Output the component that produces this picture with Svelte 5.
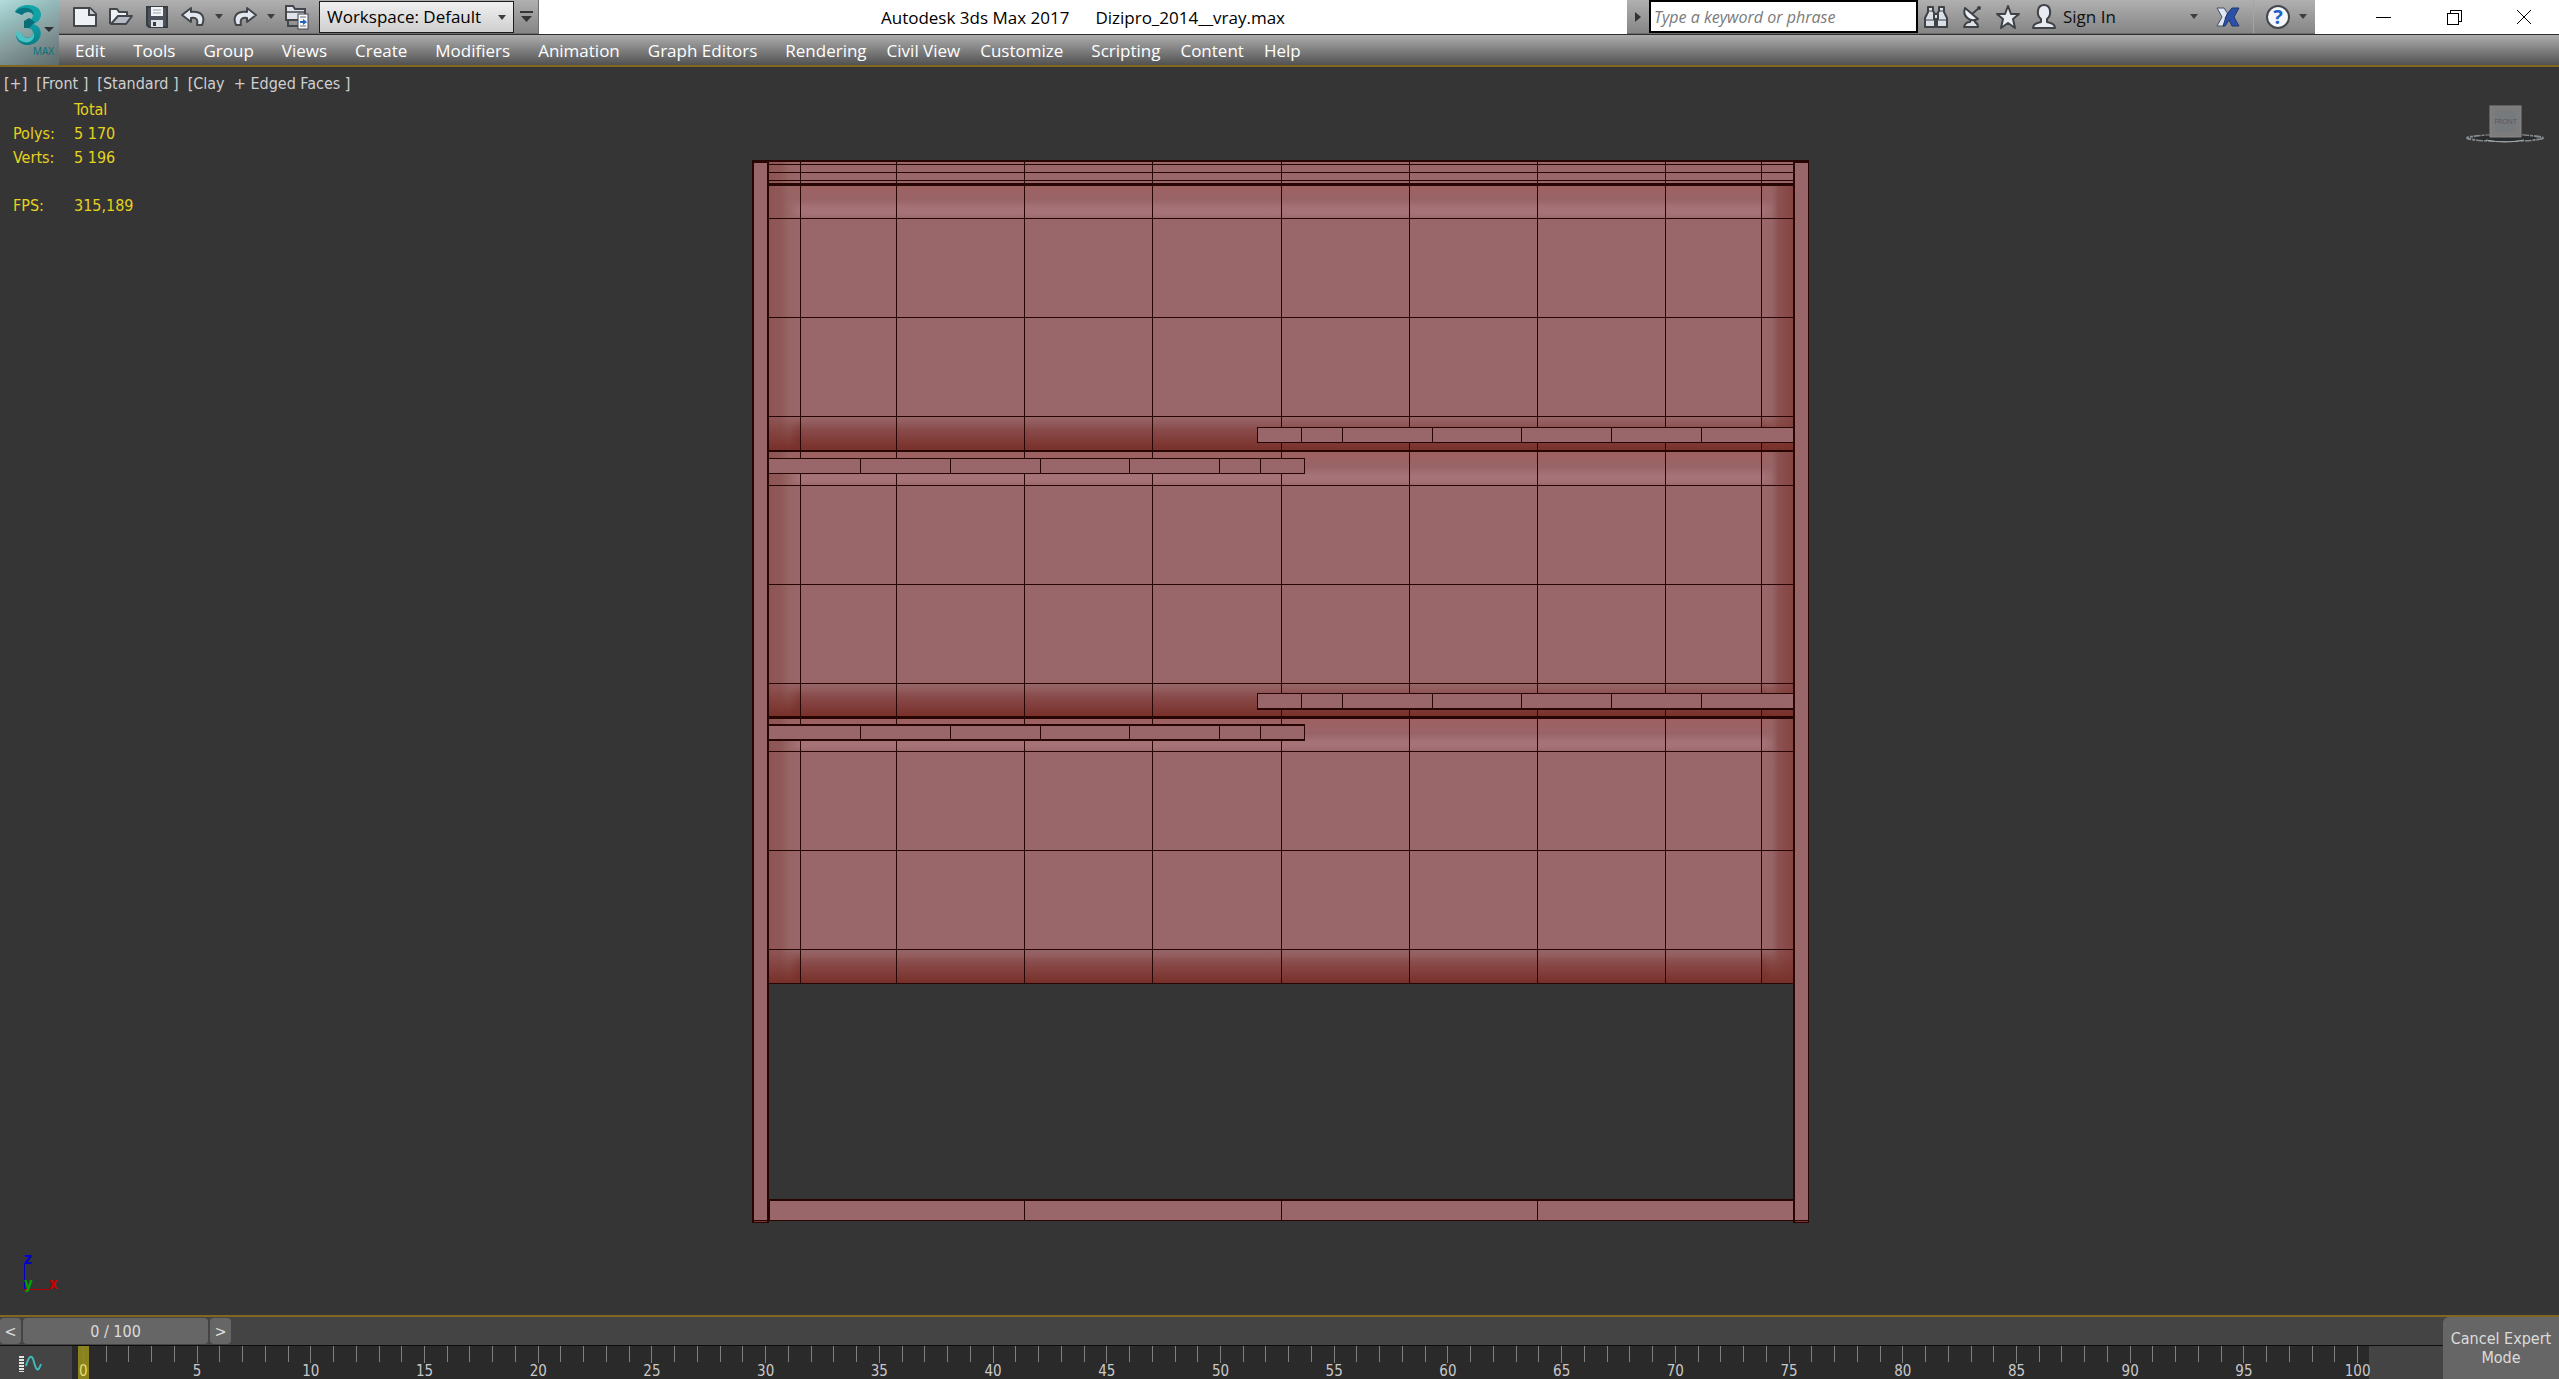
<script lang="ts">

    type MenuItem = { label: string; tight?: boolean };

    const menuItems: MenuItem[] = [
        { label: "Edit" },
        { label: "Tools" },
        { label: "Group" },
        { label: "Views" },
        { label: "Create" },
        { label: "Modifiers" },
        { label: "Animation" },
        { label: "Graph Editors" },
        { label: "Rendering", tight: true },
        { label: "Civil View", tight: true },
        { label: "Customize" },
        { label: "Scripting", tight: true },
        { label: "Content", tight: true },
        { label: "Help" },
    ];

    const viewportLabels = ["[+]", "[Front ]", "[Standard ]", "[Clay  + Edged Faces ]"];

    const stats = [
        { name: "", value: "Total" },
        { name: "Polys:", value: "5 170" },
        { name: "Verts:", value: "5 196" },
        { name: "", value: "" },
        { name: "FPS:", value: "315,189" },
    ];

    const frames = Array.from({ length: 101 }, (_, i) => i);

    let workspace = $state("Default");
    let keyword = $state("");
    let currentFrame = $state(0);

    const step = (delta: number) => {

        currentFrame = Math.min(100, Math.max(0, currentFrame + delta));

    };

    // model geometry, in viewport pixels measured from the cabinet's top left corner
    const columns = [48, 144, 272, 400, 529, 657, 785, 913, 1009];

    const panels = [
        { top: 25, bottom: 290, rows: [58, 157, 256] },
        { top: 292, bottom: 556, rows: [325, 424, 523] },
        { top: 559, bottom: 823, rows: [591, 690, 789] },
    ];

    const rails = [
        { x: 505, y: 267, width: 537, joints: [549, 590, 680, 769, 859, 949], heavy: false },
        { x: 16, y: 298, width: 537, joints: [108, 198, 288, 377, 467, 508], heavy: false },
        { x: 505, y: 533, width: 537, joints: [549, 590, 680, 769, 859, 949], heavy: false },
        { x: 16, y: 564, width: 537, joints: [108, 198, 288, 377, 467, 508], heavy: true },
    ];

</script>

{#snippet caret()}
    <svg class="caret" width="8" height="5" viewBox="0 0 8 5" aria-hidden="true">
        <path d="M0 0H8L4 5Z" fill="#3c3f42" />
    </svg>
{/snippet}

<div class="app">
    <header class="header">
        <button class="app-button" type="button" aria-label="Application menu">
            <svg width="59" height="65" viewBox="0 0 59 65" aria-hidden="true">
                <defs>
                    <linearGradient id="ribbon" x1="0" y1="0" x2="0" y2="1">
                        <stop offset="0" stop-color="#13a5a6" />
                        <stop offset="0.5" stop-color="#0b9ea2" />
                        <stop offset="1" stop-color="#087e88" />
                    </linearGradient>
                </defs>
                <path d="M15 12C18 3 40 2 41 14C41 20 37 23 33 24C42 26 42 35 39 39C35 47 18 48 16 36L22 34C25 40 33 38 33 33C33 28 28 28 24 28V21C29 21 33 19 33 15C32 11 25 11 22 15Z" fill="url(#ribbon)" />
                <path d="M15 12L22 15C25 11 32 11 33 15C35 11 29 7 23 8C19 8 17 10 15 12Z" fill="#0a7580" />
                <path d="M24 21L29 18L35 22L33 24L29 28H24Z" fill="#076d78" />
                <path d="M16 31L22 34C25 41 34 38 33 32C37 38 30 44 24 42C19 41 16 38 16 31Z" fill="#4fc3c4" />
                <path d="M44 27H54L49 32Z" fill="#2b3336" />
                <text x="33" y="55" font-size="10" fill="#04727a">MAX</text>
            </svg>
        </button>

        <div class="title-row">
            <div class="quick-access">
                <button class="tool" type="button" aria-label="New Scene">
                    <svg width="24" height="22" viewBox="0 0 24 22">
                        <path d="M1 2H17L23 8V20H1Z" fill="#eef1f6" stroke="#43474c" stroke-width="2" stroke-linejoin="round" />
                        <path d="M16 2V9H23" fill="#c9cdd5" stroke="#43474c" stroke-width="2" />
                    </svg>
                </button>
                <button class="tool" type="button" aria-label="Open File">
                    <svg width="24" height="22" viewBox="0 0 24 22">
                        <path d="M1 18V3H8L10 6H18V9" fill="#eef1f6" stroke="#43474c" stroke-width="2" stroke-linejoin="round" />
                        <path d="M2 18L9 10H23L17 18Z" fill="#b4bbc5" stroke="#43474c" stroke-width="2" stroke-linejoin="round" />
                    </svg>
                </button>
                <button class="tool" type="button" aria-label="Save File">
                    <svg width="22" height="22" viewBox="0 0 22 22">
                        <path d="M1 1H21V21H3L1 19Z" fill="#4d535d" stroke="#383c43" stroke-width="2" />
                        <rect x="5" y="1" width="12" height="9" fill="#f3f4f7" />
                        <path d="M7 4H15M7 7H15" stroke="#9ca1a9" />
                        <rect x="5" y="14" width="12" height="7" fill="#dfe2e7" />
                        <rect x="7" y="16" width="3" height="4" fill="#383c43" />
                    </svg>
                </button>
                <button class="tool" type="button" aria-label="Undo">
                    <svg width="24" height="20" viewBox="0 0 24 20">
                        <path d="M10 1L1 8L10 15V11C16 10 17 13 16 18H21C25 9 20 4 10 5Z" fill="#e4e9f1" stroke="#43474c" stroke-width="2" stroke-linejoin="round" />
                    </svg>
                </button>
                <button class="tool-caret" type="button" aria-label="Undo history">{@render caret()}</button>
                <button class="tool" type="button" aria-label="Redo">
                    <svg width="24" height="20" viewBox="0 0 24 20">
                        <path d="M14 1L23 8L14 15V11C8 10 7 13 8 18H3C-1 9 4 4 14 5Z" fill="#e4e9f1" stroke="#43474c" stroke-width="2" stroke-linejoin="round" />
                    </svg>
                </button>
                <button class="tool-caret" type="button" aria-label="Redo history">{@render caret()}</button>
                <button class="tool" type="button" aria-label="Project Folder">
                    <svg width="26" height="26" viewBox="0 0 26 26">
                        <path d="M2 16V2H9L11 5H21V16Z" fill="#e0e4ea" stroke="#43474c" stroke-width="2" />
                        <path d="M3 8H20" stroke="#6a6f76" stroke-width="2" />
                        <path d="M4 17V22H14" fill="none" stroke="#43474c" stroke-width="2" />
                        <rect x="14" y="10" width="10" height="15" fill="#f5f7fa" stroke="#43474c" />
                        <path d="M16 13H22M16 22H22" stroke="#6a6f76" />
                        <path d="M16 17H19V15L23 18L19 21V19H16Z" fill="#2461c4" />
                    </svg>
                </button>
                <div class="workspace">
                    <select aria-label="Workspace" bind:value={workspace}>
                        <option value="Default">Workspace: Default</option>
                    </select>
                    <span class="workspace-caret">{@render caret()}</span>
                </div>
                <button class="customize-bar" type="button" aria-label="Customize Quick Access Toolbar">
                    <svg width="13" height="12" viewBox="0 0 13 12">
                        <path d="M0 1H13" stroke="#34373a" stroke-width="2" />
                        <path d="M1 5H12L6.500 11Z" fill="#34373a" />
                    </svg>
                </button>
            </div>

            <h1 class="title">
                <span>Autodesk 3ds Max 2017</span>
                <span>Dizipro_2014__vray.max</span>
            </h1>

            <div class="info-center">
                <button class="expand" type="button" aria-label="Collapse search">
                    <svg width="6" height="10" viewBox="0 0 6 10"><path d="M0 0L6 5L0 10Z" fill="#303335" /></svg>
                </button>
                <input class="search" type="text" aria-label="Search" placeholder="Type a keyword or phrase" bind:value={keyword} />
                <button class="tool" type="button" aria-label="Search">
                    <svg width="26" height="24" viewBox="0 0 26 24">
                        <g fill="#dbe0e8" stroke="#3e4247" stroke-width="2" stroke-linejoin="round">
                            <path d="M5 2H10V6L12 9V22H2V13L5 7Z" />
                            <path d="M16 2H21V7L24 13V22H14V9L16 6Z" />
                            <path d="M11 9H15V14H11Z" />
                        </g>
                        <path d="M3 15H11M15 15H23M5 6H10M16 6H21" stroke="#3e4247" />
                    </svg>
                </button>
                <button class="tool" type="button" aria-label="Subscription Center">
                    <svg width="22" height="24" viewBox="0 0 22 24">
                        <path d="M3 22C4 18 7 17 9 17L10 14H13L14 17C16 18 17 20 17 22Z" fill="#dfe3ea" stroke="#3e4247" stroke-width="2" stroke-linejoin="round" />
                        <path d="M4 3C1 11 9 18 17 14Z" fill="#eef1f5" stroke="#3e4247" stroke-width="2" stroke-linejoin="round" />
                        <path d="M11 9L18 3" stroke="#3e4247" stroke-width="2" />
                        <circle cx="18" cy="3" r="2" fill="#3e4247" />
                    </svg>
                </button>
                <button class="tool" type="button" aria-label="Favorites">
                    <svg width="24" height="24" viewBox="0 0 24 24">
                        <path d="M12 1L15 9H23L17 14L19 23L12 18L5 23L7 14L1 9H9Z" fill="#e8ebf0" stroke="#3e4247" stroke-width="2" stroke-linejoin="round" />
                    </svg>
                </button>
                <button class="sign-in" type="button">
                    <svg width="26" height="26" viewBox="0 0 26 26" aria-hidden="true">
                        <path d="M2 24C2 19 7 19 10 18V15C5 11 6 1 13 1C20 1 21 11 16 15V18C19 19 24 19 24 24Z" fill="#e8ecf2" stroke="#3e4247" stroke-width="2" stroke-linejoin="round" />
                    </svg>
                    <span>Sign In</span>
                    {@render caret()}
                </button>
                <button class="exchange" type="button" aria-label="Autodesk App Store">
                    <svg width="24" height="22" viewBox="0 0 24 22">
                        <path d="M1 2H8L12 8L9 12L11 16L8 20H1L6 11Z" fill="#dfe5f1" stroke="#44516c" />
                        <path d="M23 2H16L11 8L7 20H9L13 14L16 20H23L18 11Z" fill="#2c4fa8" stroke="#20376f" />
                    </svg>
                </button>
                <button class="help" type="button" aria-label="Help">
                    <svg width="26" height="26" viewBox="0 0 26 26">
                        <circle cx="13" cy="13" r="11" fill="#f5f7fa" stroke="#44484d" stroke-width="2" />
                        <text class="help-mark" x="13" y="20" text-anchor="middle">?</text>
                    </svg>
                    {@render caret()}
                </button>
            </div>

            <div class="window-buttons">
                <button type="button" aria-label="Minimize">
                    <svg width="16" height="16" viewBox="0 0 16 16"><path d="M0 8H15" /></svg>
                </button>
                <button type="button" aria-label="Restore">
                    <svg width="16" height="16" viewBox="0 0 16 16"><path d="M1 4H12V15H1ZM4 4V1H15V12H12" /></svg>
                </button>
                <button type="button" aria-label="Close">
                    <svg class="smooth" width="16" height="16" viewBox="0 0 16 16"><path d="M1 1L15 15M15 1L1 15" /></svg>
                </button>
            </div>
        </div>

        <nav class="menu-bar" aria-label="Main menu">
            {#each menuItems as item}
                <button class={`menu-item ${item.tight ? "menu-item-tight" : ""}`} type="button">{item.label}</button>
            {/each}
        </nav>
    </header>

    <main class="viewport">
        <div class="overlay">
            <div class="viewport-labels">
                {#each viewportLabels as label}
                    <button type="button">{label}</button>
                {/each}
            </div>
            <table class="stats">
                <tbody>
                    {#each stats as row}
                        <tr>
                            <th scope="row">{row.name}</th>
                            <td>{row.value}</td>
                        </tr>
                    {/each}
                </tbody>
            </table>
        </div>

        <svg class="model" width="1059" height="1066" viewBox="-2 -2 1059 1066" role="img" aria-label="Front view of the cabinet">
            <defs>
                <linearGradient id="band-top" x1="0" y1="0" x2="0" y2="1">
                    <stop offset="0" stop-color="#9e6060" />
                    <stop offset="0.450" stop-color="#996468" />
                    <stop offset="0.700" stop-color="#a57277" />
                    <stop offset="0.850" stop-color="#a67478" />
                    <stop offset="1" stop-color="#9c6a6d" />
                </linearGradient>
                <linearGradient id="band-bottom" x1="0" y1="0" x2="0" y2="1">
                    <stop offset="0" stop-color="#976768" />
                    <stop offset="0.200" stop-color="#925c5d" />
                    <stop offset="0.400" stop-color="#894b4b" />
                    <stop offset="1" stop-color="#78302a" />
                </linearGradient>
                <linearGradient id="side-left" x1="0" y1="0" x2="1" y2="0">
                    <stop offset="0" stop-color="#8f5454" />
                    <stop offset="0.400" stop-color="#8f5858" />
                    <stop offset="0.650" stop-color="#956563" stop-opacity="0.900" />
                    <stop offset="1" stop-color="#976666" stop-opacity="0" />
                </linearGradient>
                <linearGradient id="side-right" x1="0" y1="0" x2="1" y2="0">
                    <stop offset="0" stop-color="#996669" stop-opacity="0" />
                    <stop offset="0.300" stop-color="#966364" stop-opacity="0.600" />
                    <stop offset="0.500" stop-color="#8b5251" />
                    <stop offset="1" stop-color="#854341" />
                </linearGradient>
                <linearGradient id="corner" x1="0" y1="0" x2="0" y2="1">
                    <stop offset="0" stop-color="#78302a" stop-opacity="0" />
                    <stop offset="1" stop-color="#78302a" />
                </linearGradient>
            </defs>

            <rect class="clay" x="16" y="0" width="1026" height="24" />
            <rect x="16" y="0" width="32" height="24" fill="url(#side-left)" />
            {#each panels as panel}
                <rect class="clay" x="16" y={panel.top} width="1026" height={panel.bottom - panel.top} />
                <rect x="16" y={panel.top} width="1026" height={panel.rows[0] - panel.top} fill="url(#band-top)" />
                <rect x="16" y={panel.rows[2]} width="1026" height={panel.bottom - panel.rows[2]} fill="url(#band-bottom)" />
                <rect x="16" y={panel.top} width="32" height={panel.bottom - panel.top} fill="url(#side-left)" />
                <rect x="1010" y={panel.top} width="32" height={panel.bottom - panel.top} fill="url(#side-right)" />
                <rect x="16" y={panel.rows[2]} width="32" height={panel.bottom - panel.rows[2]} fill="url(#corner)" />
                <rect x="1010" y={panel.rows[2]} width="32" height={panel.bottom - panel.rows[2]} fill="url(#corner)" />
            {/each}

            <g class="edge">
                {#each columns as x}
                    <rect {x} y="0" width="1" height="823" />
                {/each}
                {#each [4, 12, 20] as y}
                    <rect x="16" {y} width="1026" height="1" />
                {/each}
                {#each panels as panel}
                    {#each panel.rows as y}
                        <rect x="16" {y} width="1026" height="1" />
                    {/each}
                {/each}
                <rect x="0" y="0" width="1058" height="2" />
                <rect x="16" y="23" width="1026" height="3" />
                <rect x="16" y="290" width="1026" height="2" />
                <rect x="16" y="556" width="1026" height="3" />
                <rect x="16" y="823" width="1026" height="1" />
            </g>

            {#each rails as rail}
                <rect class="edge" x={rail.x} y={rail.y} width={rail.width} height={rail.heavy ? 17 : 16} />
                <rect class="clay" x={rail.x + 1} y={rail.y + (rail.heavy ? 2 : 1)} width={rail.width - 2} height={rail.heavy ? 13 : 14} />
                {#each rail.joints as x}
                    <rect class="edge" {x} y={rail.y} width="1" height="16" />
                {/each}
            {/each}
            <rect class="edge" x="505" y="548" width="537" height="2" />

            <rect class="edge" x="16" y="1039" width="1026" height="22" />
            <rect class="clay" x="18" y="1041" width="1024" height="19" />
            {#each [17, 272, 529, 785] as x}
                <rect class="edge" {x} y="1039" width="1" height="21" />
            {/each}

            {#each [0, 1041] as x}
                <rect class="edge" {x} y="0" width="17" height="1063" />
                <rect class="clay" x={x + 2} y="3" width="13" height="1057" />
                <rect x={x + 2} y="1061" width="13" height="1" fill="#7c3435" />
            {/each}
        </svg>

        <button class="view-cube" type="button" aria-label="View cube">
            <svg width="82" height="40" viewBox="0 0 82 40">
                <ellipse cx="41" cy="33" rx="38" ry="3" fill="none" stroke="#858a8d" stroke-width="2" stroke-dasharray="7 1 3 1" />
                <ellipse cx="41" cy="33" rx="31" ry="3" fill="#292c2e" />
                <path d="M22 35Q41 39 60 35" fill="none" stroke="#a6abae" stroke-width="1" />
                <rect x="26" y="1" width="31" height="31" fill="#7c7c7c" stroke="#868686" />
                <rect x="31" y="6" width="21" height="21" fill="#777a7d" />
                <text x="41.500" y="19" text-anchor="middle" font-size="7" fill="#52575d">FRONT</text>
            </svg>
        </button>

        <svg class="axes" width="44" height="52" viewBox="0 -6 44 52" aria-hidden="true">
            <path d="M4.500 10V37" stroke="#0000c8" />
            <path d="M4 36.500H30" stroke="#b40000" />
            <text x="4" y="11" fill="#0000c8">z</text>
            <text x="4" y="36" fill="#00a000">y</text>
            <text x="29" y="36" fill="#c80000">x</text>
        </svg>
    </main>

    <footer class="footer">
        <div class="time-panel">
            <div class="time-slider">
                <button class="frame-step" type="button" aria-label="Previous frame" onclick={() => step(-1)}>&lt;</button>
                <button class="frame-count" type="button">{currentFrame} / 100</button>
                <button class="frame-step" type="button" aria-label="Next frame" onclick={() => step(1)}>&gt;</button>
            </div>
            <div class="track-bar">
                <button class="curve-toggle" type="button" aria-label="Open Mini Curve Editor">
                    <svg width="24" height="18" viewBox="0 0 24 18">
                        <path d="M3.500 1V17" stroke="#e4e4e4" stroke-width="5" stroke-dasharray="2 1" />
                        <path d="M8 11C11 0 14 -1 16 7S20 18 23 9" fill="none" stroke="#3fb9b9" stroke-width="2" />
                    </svg>
                </button>
                <div class="ruler">
                    {#each frames as frame}
                        <div class={`frame ${frame === currentFrame ? "frame-current" : ""}`}>
                            <i class={`tick ${frame % 5 === 0 ? "tick-major" : ""}`}></i>
                            {#if frame % 5 === 0}
                                <span class="frame-label">{frame}</span>
                            {/if}
                        </div>
                    {/each}
                </div>
            </div>
        </div>
        <button class="cancel" type="button">Cancel Expert Mode</button>
    </footer>
</div>

<style>
    :global(body) {
        background: #353535;
    }

    .app {
        display: flex;
        flex-direction: column;
        min-height: 100vh;
        font-family: "Open Sans", "Noto Sans", sans-serif;
        font-size: 17px;
    }

    button {
        margin: 0;
        padding: 0;
        border: 0;
        background: none;
        color: inherit;
        font: inherit;
    }

    svg {
        display: block;
        flex: none;
    }

    .header {
        display: grid;
        grid-template-columns: 59px 1fr;
        grid-template-rows: 35px 30px;
        border-bottom: 2px solid #7f6722;
    }

    .app-button {
        grid-row: 1 / 3;
        background: linear-gradient(155deg, #b4dcdc 0%, #93b9b9 30%, #879c9d 55%, #5c6a6b 100%);
    }

    .title-row {
        display: flex;
        box-sizing: border-box;
        border-bottom: 1px solid #2b2e2e;
        background: #fff;
    }

    .quick-access,
    .info-center {
        display: flex;
        align-items: center;
        border-bottom: 1px solid #6d6d6d;
        background: linear-gradient(#b0b0b0, #858585);
    }

    .quick-access {
        padding-left: 8px;
        border-right: 1px solid #6d6d6d;
    }

    .tool,
    .tool-caret,
    .customize-bar,
    .expand,
    .exchange,
    .window-buttons button {
        display: flex;
        align-items: center;
        justify-content: center;
        height: 33px;
    }

    .tool {
        width: 36px;
    }

    .tool-caret {
        width: 16px;
    }

    .workspace {
        position: relative;
        margin-left: 4px;
    }

    .workspace select {
        display: block;
        box-sizing: border-box;
        width: 195px;
        height: 32px;
        padding: 0 24px 0 7px;
        border: 1px solid #1c1c1c;
        border-radius: 0;
        background: linear-gradient(#f0f0f0, #cfcfcf);
        color: #000;
        font: inherit;
        appearance: none;
    }

    .workspace-caret {
        position: absolute;
        right: 8px;
        top: 14px;
        pointer-events: none;
    }

    .customize-bar {
        width: 24px;
    }

    .title {
        display: flex;
        flex: 1;
        align-items: center;
        justify-content: center;
        gap: 26px;
        margin: 0;
        color: #000;
        font-size: 17px;
        font-weight: 400;
        white-space: nowrap;
    }

    .expand {
        width: 22px;
    }

    .search {
        box-sizing: border-box;
        width: 269px;
        height: 33px;
        padding: 0 3px;
        border: 2px solid #000;
        border-radius: 0;
        background: #fff;
        font-family: inherit;
        font-size: 16px;
        font-style: italic;
    }

    .search::placeholder {
        color: #7a7a7a;
    }

    .sign-in {
        display: flex;
        align-items: center;
        width: 180px;
        height: 33px;
        padding: 0 8px 0 5px;
        color: #101010;
    }

    .sign-in span {
        flex: 1;
        padding-left: 6px;
        text-align: left;
    }

    .exchange {
        width: 48px;
        padding-right: 4px;
        border-right: 1px solid #a4a4a4;
    }

    .help {
        display: flex;
        align-items: center;
        gap: 8px;
        width: 61px;
        padding-left: 11px;
    }

    .help-mark {
        fill: #2161cc;
        font-size: 20px;
        font-weight: 700;
    }

    .window-buttons {
        display: flex;
        justify-content: flex-end;
        width: 244px;
    }

    .window-buttons button {
        width: 70px;
    }

    .window-buttons path {
        fill: none;
        stroke: #000;
        shape-rendering: crispEdges;
    }

    .window-buttons .smooth path {
        shape-rendering: auto;
    }

    .menu-bar {
        display: flex;
        align-items: center;
        padding-left: 16px;
        background: linear-gradient(#adadad, #525252);
        color: #fff;
    }

    .menu-item {
        margin-right: 28px;
        white-space: nowrap;
    }

    .menu-item-tight {
        margin-right: 20px;
    }

    .viewport {
        position: relative;
        display: flex;
        flex: 1;
        align-items: center;
        justify-content: center;
        background: #353535;
    }

    .overlay {
        position: absolute;
        left: 4px;
        top: 5px;
        color: #cfcfcf;
        font-family: "DejaVu Sans Condensed", "Noto Sans", sans-serif;
        font-size: 16px;
        line-height: 24px;
    }

    .viewport-labels {
        display: flex;
        gap: 9px;
        white-space: pre;
    }

    .stats {
        margin-top: 2px;
        margin-left: 9px;
        border-collapse: collapse;
        color: #e6d21e;
    }

    .stats th,
    .stats td {
        height: 24px;
        padding: 0;
        font-weight: 400;
        text-align: left;
    }

    .stats th {
        width: 61px;
    }

    .model {
        shape-rendering: crispEdges;
    }

    .clay {
        fill: #996669;
    }

    .edge {
        fill: #260502;
    }

    .view-cube {
        position: absolute;
        right: 13px;
        top: 38px;
    }

    .axes {
        position: absolute;
        left: 20px;
        bottom: 16px;
        font-family: "DejaVu Sans Condensed", sans-serif;
        font-size: 15px;
        font-weight: 700;
    }

    .footer {
        display: flex;
        border-top: 2px solid #7f6722;
        background: #444;
        color: #dcdcdc;
        font-family: "DejaVu Sans Condensed", "Noto Sans", sans-serif;
        font-size: 16px;
    }

    .time-panel {
        flex: 1;
    }

    .time-slider {
        display: flex;
        gap: 2px;
        height: 26px;
        padding: 1px 0;
        border-bottom: 1px solid #0c0c0c;
    }

    .frame-step,
    .frame-count {
        border-radius: 4px;
        background: #666;
    }

    .frame-step {
        width: 21px;
    }

    .frame-count {
        width: 185px;
    }

    .track-bar {
        display: grid;
        grid-template-columns: 72px 1fr 74px;
        height: 33px;
    }

    .curve-toggle {
        display: flex;
        align-items: center;
        justify-content: center;
        padding-top: 2px;
        padding-right: 12px;
    }

    .ruler {
        display: grid;
        grid-template-columns: repeat(101, minmax(0, 1fr));
        background: #2a2a2a;
    }

    .frame {
        display: flex;
        flex-direction: column;
        align-items: center;
    }

    .frame-current {
        background: linear-gradient(#8a821f, #8a821f) center / 11px 100% no-repeat;
    }

    .tick {
        flex: none;
        width: 1px;
        height: 16px;
        background: #808080;
    }

    .tick-major {
        height: 17px;
    }

    .frame-label {
        color: #c8c8c8;
        font-size: 15px;
        line-height: 16px;
        white-space: nowrap;
    }

    .frame-current .frame-label {
        color: #e8dc6a;
    }

    .cancel {
        width: 116px;
        border-radius: 6px 0 0 0;
        background: #666;
        line-height: 19px;
    }
</style>
